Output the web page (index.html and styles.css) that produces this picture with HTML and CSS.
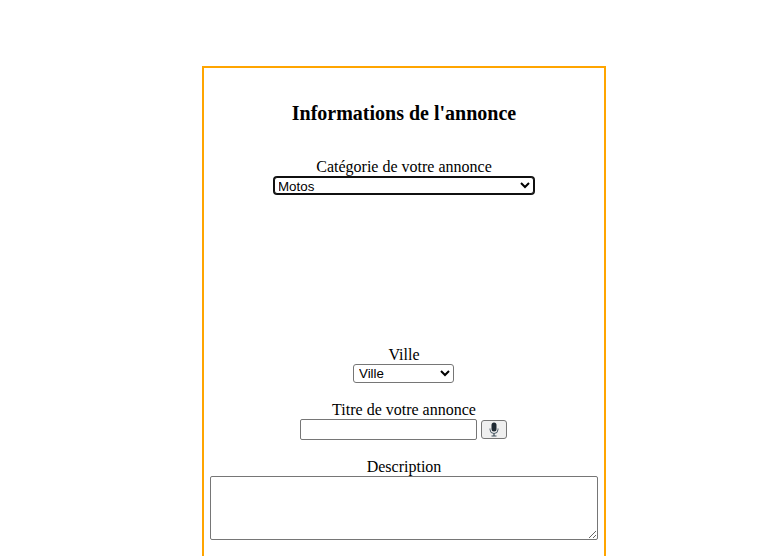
FILE: index.html
```html
<!DOCTYPE html>
<html lang="fr">
<head>
    <meta charset="UTF-8">
    <meta name="viewport" content="width=device-width, initial-scale=1.0">
    <title>Informations de l'annonce</title>
    <link rel="stylesheet" href="styles.css">
</head>
<body>
    <form class="annonce-box">
        <h3 class="annonce-title">Informations de l'annonce</h3>

        <div class="field field-categorie">
            <label for="categorie">Catégorie de votre annonce</label>
            <select id="categorie" class="select-categorie">
                <option>Motos</option>
            </select>
        </div>

        <div class="field field-ville">
            <label for="ville">Ville</label>
            <select id="ville" class="select-ville">
                <option>Ville</option>
            </select>
        </div>

        <div class="field field-titre">
            <label for="titre">Titre de votre annonce</label>
            <div class="titre-row">
                <input id="titre" type="text" class="input-titre">
                <button type="button" class="mic-btn" aria-label="Dicter">
                    <svg width="10" height="15" viewBox="0 0 10 15">
                        <rect x="2.5" y="0.5" width="5" height="9" rx="2.5" fill="#1f2a33"/>
                        <path d="M1 6.5v1a4 4 0 0 0 8 0v-1" fill="none" stroke="#4a5a66" stroke-width="1"/>
                        <path d="M5 11.5v2M2.5 14h5" stroke="#3f4f5a" stroke-width="1.2" fill="none"/>
                    </svg>
                </button>
            </div>
        </div>

        <div class="field field-description">
            <label for="description">Description</label>
            <textarea id="description" class="input-description"></textarea>
        </div>
    </form>
</body>
</html>
```

FILE: styles.css
```css
* {
    box-sizing: border-box;
}

html, body {
    height: 556px;
    overflow: hidden;
}

body {
    margin: 0;
    padding: 66px 0 0 202px;
    font-family: "Liberation Serif", "Times New Roman", serif;
    font-size: 16px;
    color: #000000;
    background: #ffffff;
}

.annonce-box {
    width: 404px;
    height: 490px;
    padding: 0 6px;
    border: 2px solid #ffa500;
    border-bottom: 0;
    text-align: center;
}

.annonce-title {
    margin: 0;
    padding-top: 34px;
    font-size: 20px;
    line-height: 22px;
}

.field label {
    display: block;
    line-height: 18px;
}

.field-categorie {
    margin-top: 34px;
    height: 188px;
}

.field select {
    display: block;
    height: 19px;
    padding: 0;
    font-family: "Liberation Sans", Arial, sans-serif;
    font-size: 13.33px;
    background: #ffffff;
    color: #000000;
    border: 1px solid #767676;
    border-radius: 3px;
}

.field .select-categorie {
    width: 260px;
    height: 17px;
    margin: 1px auto;
    text-indent: -1px;
    border-color: #101010;
    box-shadow: 0 0 0 1px #101010;
}

.field .select-ville {
    width: 101px;
    margin-left: 143px;
    padding-left: 1px;
}

.field-titre {
    margin-top: 18px;
}

.titre-row {
    display: flex;
    justify-content: center;
    align-items: center;
    gap: 4px;
    height: 21px;
    padding-right: 2px;
}

.input-titre {
    width: 177px;
    height: 21px;
    padding: 1px 2px;
    border: 1px solid #767676;
    border-radius: 2px;
}

.mic-btn {
    display: flex;
    align-items: center;
    justify-content: center;
    width: 26px;
    height: 19px;
    padding: 0;
    background: #efefef;
    border: 1px solid #767676;
    border-radius: 3px;
}

.field-description {
    margin-top: 18px;
}

.input-description {
    display: block;
    width: 388px;
    height: 64px;
    margin: 0 auto;
    border: 1px solid #767676;
    border-radius: 2px;
}
```
